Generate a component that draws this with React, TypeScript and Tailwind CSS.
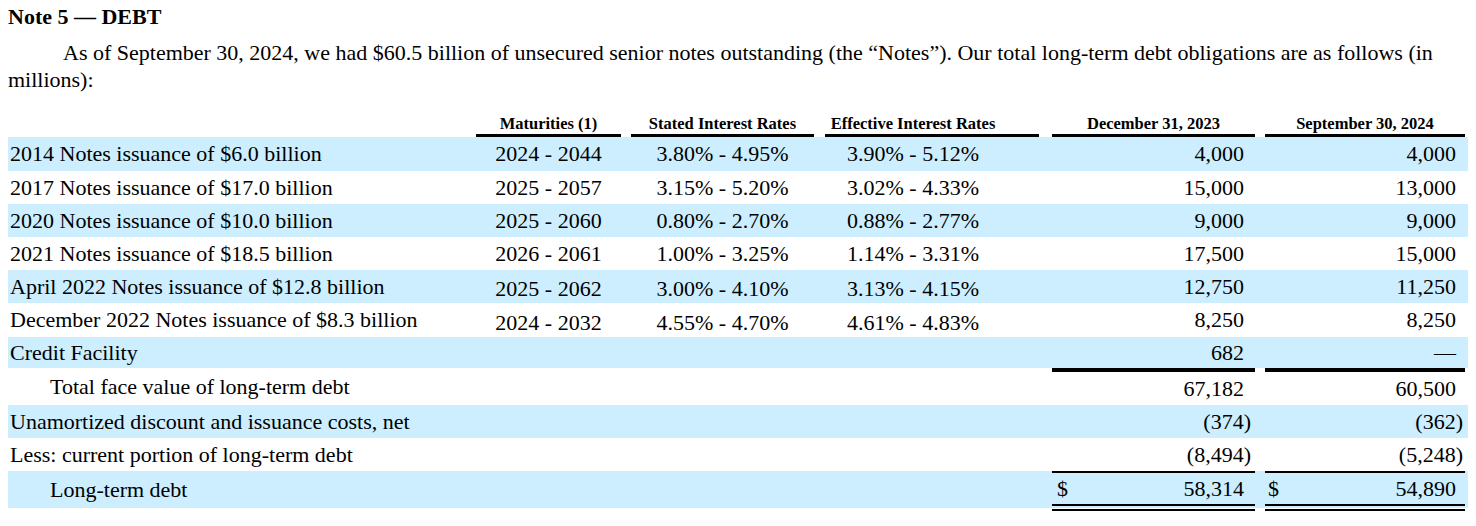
import type { ReactNode } from 'react'

type DebtRow = {
  label: string
  indent?: boolean
  mat?: string
  stated?: string
  eff?: string
  dec: string
  sep: string
  decDollar?: boolean
  sepDollar?: boolean
  blue?: boolean
  height: string
  lower?: string
  rule?: 'total' | 'final'
}

const rows: DebtRow[] = [
  { label: '2014 Notes issuance of $6.0 billion', mat: '2024 - 2044', stated: '3.80% - 4.95%', eff: '3.90% - 5.12%', dec: '4,000', sep: '4,000', blue: true, height: 'h-[34px]' },
  { label: '2017 Notes issuance of $17.0 billion', mat: '2025 - 2057', stated: '3.15% - 5.20%', eff: '3.02% - 4.33%', dec: '15,000', sep: '13,000', height: 'h-[33px]' },
  { label: '2020 Notes issuance of $10.0 billion', mat: '2025 - 2060', stated: '0.80% - 2.70%', eff: '0.88% - 2.77%', dec: '9,000', sep: '9,000', blue: true, height: 'h-[33px]' },
  { label: '2021 Notes issuance of $18.5 billion', mat: '2026 - 2061', stated: '1.00% - 3.25%', eff: '1.14% - 3.31%', dec: '17,500', sep: '15,000', height: 'h-[33px]' },
  { label: 'April 2022 Notes issuance of $12.8 billion', mat: '2025 - 2062', stated: '3.00% - 4.10%', eff: '3.13% - 4.15%', dec: '12,750', sep: '11,250', blue: true, height: 'h-[33px]', lower: 'pt-[4px]' },
  { label: 'December 2022 Notes issuance of $8.3 billion', mat: '2024 - 2032', stated: '4.55% - 4.70%', eff: '4.61% - 4.83%', dec: '8,250', sep: '8,250', height: 'h-[34px]', lower: 'pt-[6px]' },
  { label: 'Credit Facility', dec: '682', sep: '—', blue: true, height: 'h-[31px]' },
  { label: 'Total face value of long-term debt', indent: true, dec: '67,182', sep: '60,500', height: 'h-[37px]', rule: 'total' },
  { label: 'Unamortized discount and issuance costs, net', dec: '(374)', sep: '(362)', blue: true, height: 'h-[33px]' },
  { label: 'Less: current portion of long-term debt', dec: '(8,494)', sep: '(5,248)', height: 'h-[33px]' },
  { label: 'Long-term debt', indent: true, dec: '58,314', sep: '54,890', decDollar: true, sepDollar: true, blue: true, height: 'h-[37px]', rule: 'final' },
]

function Amount({ value }: { value: string }) {
  if (value.endsWith(')')) {
    return (
      <span>
        {value.slice(0, -1)}
        <span className="-mr-[7px]">)</span>
      </span>
    )
  }
  return <span>{value}</span>
}

function MoneyCell({
  value,
  dollar,
  rule,
  width,
  gap,
  pad,
}: {
  value: string
  dollar?: boolean
  rule?: 'total' | 'final'
  width: string
  gap: string
  pad: string
}) {
  let border = ''
  if (rule === 'total') border = 'border-t-4 border-black'
  if (rule === 'final') border = 'self-start h-[40px] border-t-2 border-b-[7px] border-double border-black'
  return (
    <div className={`${width} ${gap} ${pad} ${border} flex items-center ${dollar ? 'justify-between' : 'justify-end'}`}>
      {dollar && <span>$</span>}
      <Amount value={value} />
    </div>
  )
}

function Header({ children, className }: { children: ReactNode; className: string }) {
  return (
    <div className={`${className} flex items-end justify-center border-b-[3px] border-black text-[16.5px] leading-[20px] font-bold`}>
      {children}
    </div>
  )
}

export default function App() {
  return (
    <div className="min-h-[526px] bg-white px-[8px] font-['Liberation_Serif','Times_New_Roman',serif] text-black">
      <h2 className="text-[22px] leading-[34px] font-bold">Note 5 — DEBT</h2>
      <p className="mt-[5px] indent-[55px] text-[22px] leading-[27px]">
        As of September 30, 2024, we had $60.5 billion of unsecured senior notes outstanding (the “Notes”). Our total
        long-term debt obligations are as follows (in millions):
      </p>

      <div className="text-[22px] leading-[34px]">
        <div className="flex h-[44px]">
          <div className="w-[468px]" />
          <Header className="w-[145px]">Maturities (1)</Header>
          <Header className="ml-[10px] w-[183px]">Stated Interest Rates</Header>
          <Header className="ml-[11px] w-[214px] pr-[38px]">Effective Interest Rates</Header>
          <Header className="ml-[13px] w-[203px]">December 31, 2023</Header>
          <Header className="ml-[10px] w-[200px]">September 30, 2024</Header>
        </div>

        {rows.map((r) => (
          <div key={r.label} className={`flex ${r.height} ${r.blue ? 'bg-[#cceeff]' : ''}`}>
            <div className={`flex w-[468px] items-center whitespace-nowrap ${r.indent ? 'pl-[42px]' : 'pl-[2px]'}`}>
              {r.label}
            </div>
            <div className={`flex w-[145px] items-center justify-center ${r.lower ?? ''}`}>{r.mat}</div>
            <div className={`ml-[10px] flex w-[183px] items-center justify-center ${r.lower ?? ''}`}>{r.stated}</div>
            <div className={`ml-[11px] flex w-[214px] items-center justify-center pr-[38px] ${r.lower ?? ''}`}>{r.eff}</div>
            <MoneyCell value={r.dec} dollar={r.decDollar} rule={r.rule} width="w-[203px]" gap="ml-[13px]" pad="pl-[5px] pr-[11px]" />
            <MoneyCell value={r.sep} dollar={r.sepDollar} rule={r.rule} width="w-[200px]" gap="ml-[10px]" pad="pl-[3px] pr-[9px]" />
          </div>
        ))}
      </div>
    </div>
  )
}
